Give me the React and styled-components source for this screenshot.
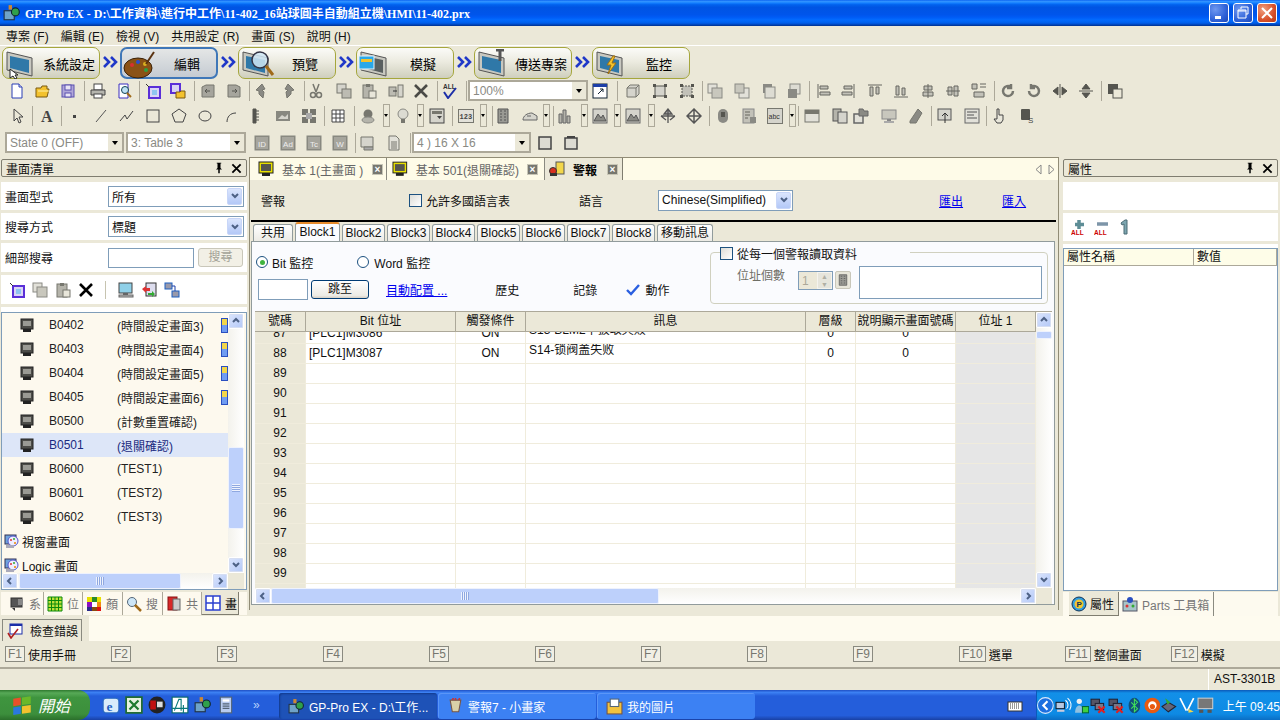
import React from 'react';
import styled, { createGlobalStyle } from 'styled-components';

const SANS = '"Liberation Sans", "Noto Sans CJK TC", sans-serif';

const GlobalStyle = createGlobalStyle`
  html, body {
    margin: 0;
    width: 1280px;
    height: 720px;
    overflow: hidden;
    background: #ebe8d8;
    font-family: ${SANS};
    font-size: 12px;
    color: #111;
  }
  * { box-sizing: border-box; }
`;

const Desktop = styled.div`
  width: 1280px;
  height: 720px;
  display: flex;
  flex-direction: column;
`;

/* title bar */
const TitleBar = styled.div`
  height: 26px;
  flex: none;
  display: flex;
  align-items: center;
  padding: 0 3px 0 3px;
  background: linear-gradient(#0058ee 0, #3593ff 4%, #288eff 8%, #127dff 12%, #0262ee 18%, #0054e3 28%, #0055eb 56%, #005bf5 66%, #026afe 76%, #0062ef 86%, #0052d6 92%, #0040ab 96%, #003092 100%);
`;
const TitleText = styled.div`
  margin-left: 4px;
  font-family: "Liberation Serif", "Noto Sans CJK TC", serif;
  font-weight: 700;
  font-size: 12px;
  color: #fff;
  white-space: nowrap;
`;
const WinButtons = styled.div`
  margin-left: auto;
  display: flex;
  gap: 4px;
`;
const WinButton = styled.div`
  width: 20px;
  height: 20px;
  border: 1px solid #fff;
  border-radius: 3px;
  background: ${p => p.$close
    ? 'radial-gradient(circle at 30% 30%, #f0a080, #d8502a 60%, #b83a18)'
    : 'radial-gradient(circle at 30% 30%, #6f98f0, #2f62d8 60%, #1c48b8)'};
  display: flex;
  align-items: center;
  justify-content: center;
`;

/* menu */
const MenuBar = styled.div`
  height: 20px;
  flex: none;
  display: flex;
  align-items: center;
  gap: 12px;
  padding-left: 6px;
  border-bottom: 1px solid #fff;
  white-space: nowrap;
`;

/* workflow */
const FlowBar = styled.div`
  height: 33px;
  flex: none;
  display: flex;
  align-items: flex-start;
  padding: 1px 0 0 2px;
`;
const Step = styled.div`
  width: 98px;
  height: 32px;
  flex: none;
  display: flex;
  align-items: center;
  position: relative;
  padding-left: 36px;
  border-radius: 7px;
  border: ${p => (p.$active ? '2px solid #3f77b8' : '1px solid #a5a63c')};
  background: ${p => (p.$active
    ? 'linear-gradient(#e4e6e6, #c5cbd2)'
    : 'linear-gradient(#fbfbf8 0, #ecebe0 45%, #cfcfbd 100%)')};
`;
const StepIcon = styled.div`
  position: absolute;
  left: 1px;
  top: 1px;
`;
const StepLabel = styled.span`
  flex: 1;
  text-align: center;
  font-size: 13px;
  color: #000;
`;
const FlowArrow = styled.div`
  width: 20px;
  flex: none;
  height: 30px;
  display: flex;
  align-items: center;
  justify-content: center;
`;

/* toolbars */
const ToolRow = styled.div`
  height: ${p => p.$h}px;
  flex: none;
  display: flex;
  align-items: center;
`;
const Slot = styled.div`
  flex: none;
  margin-left: ${p => p.$gap}px;
  width: ${p => p.$w}px;
  display: flex;
  align-items: center;
  justify-content: center;
`;
const ToolSep = styled.div`
  width: 1px;
  height: 20px;
  background: #aca899;
`;
const DropBox = styled.div`
  width: 7px;
  height: 23px;
  border: 1px solid #aca899;
  display: flex;
  align-items: center;
  justify-content: center;
  &::after {
    content: '';
    border: 2px solid transparent;
    border-top: 3px solid #000;
    border-bottom: 0;
  }
`;
const ToolCombo = styled.div`
  width: 100%;
  height: 21px;
  display: flex;
  background: #fff;
  border: 2px solid #aca899;
  color: #8a8a84;
  align-items: center;
  padding-left: 3px;
  white-space: nowrap;
  font-size: 12px;
`;
const ToolComboBtn = styled.div`
  margin-left: auto;
  width: 14px;
  height: 100%;
  flex: none;
  background: #ebe8d8;
  display: flex;
  align-items: center;
  justify-content: center;
  &::after {
    content: '';
    border: 3px solid transparent;
    border-top: 4px solid #000;
    border-bottom: 0;
  }
`;

/* main */
const Main = styled.div`
  height: 460px;
  flex: none;
  display: flex;
`;
const SidePanel = styled.div`
  width: ${p => p.$w}px;
  margin-left: ${p => p.$ml}px;
  flex: none;
  display: flex;
  flex-direction: column;
  padding-top: 3px;
`;
const DockTitle = styled.div`
  height: 18px;
  flex: none;
  border: 1px solid #7f7d70;
  border-radius: 2px;
  display: flex;
  align-items: center;
  padding: 0 4px;
  font-size: 12px;
`;
const DockButtons = styled.div`
  margin-left: auto;
  display: flex;
  gap: 6px;
  align-items: center;
`;
const WhiteRow = styled.div`
  height: ${p => p.$h}px;
  margin-top: ${p => p.$mt}px;
  flex: none;
  background: #fff;
  display: flex;
  align-items: center;
  padding-left: 4px;
`;
const RowLabel = styled.span`
  width: 103px;
  flex: none;
  font-size: 12px;
`;
const BlueCombo = styled.div`
  width: ${p => p.$w}px;
  height: 21px;
  flex: none;
  border: 1px solid #7f9db9;
  background: #fff;
  display: flex;
  align-items: center;
  padding-left: 3px;
  font-size: 12px;
  white-space: nowrap;
`;
const ComboBtn = styled.div`
  margin: 1px;
  margin-left: auto;
  width: 15px;
  height: 17px;
  border-radius: 2px;
  background: linear-gradient(#dbe5fd, #b3c8f7);
  border: 1px solid #c8d6f8;
  display: flex;
  align-items: center;
  justify-content: center;
`;
const TextBox = styled.div`
  width: ${p => p.$w}px;
  height: ${p => p.$h}px;
  flex: none;
  border: 1px solid #7f9db9;
  background: #fff;
`;
const SearchBtn = styled.div`
  width: 45px;
  height: 19px;
  margin-left: 4px;
  border: 1px solid #c9c7ba;
  border-radius: 3px;
  background: #f2f0e6;
  color: #a3a297;
  text-align: center;
  line-height: 17px;
  font-size: 12px;
`;
const IconRowSep = styled.div`
  width: 1px;
  height: 18px;
  margin: 0 8px 0 8px;
  background: #c7c4b0;
`;
const IconCell = styled.div`
  width: 23px;
  height: 18px;
  flex: none;
  display: flex;
  align-items: center;
  justify-content: center;
`;
const WhiteStrip = styled.div`
  height: 5px;
  margin-top: 3px;
  flex: none;
  background: #fff;
`;
const ListFrame = styled.div`
  height: 278px;
  flex: none;
  border: 1px solid #7f9db9;
  display: flex;
  flex-direction: column;
  background: #fdf9ee;
`;
const ListMain = styled.div`
  flex: 1;
  min-height: 0;
  display: flex;
`;
const ListBody = styled.div`
  width: 226px;
  flex: none;
  overflow: hidden;
`;
const ListRow = styled.div`
  height: 24px;
  display: flex;
  align-items: center;
  padding-left: 17px;
  background: ${p => (p.$sel ? '#dde6f8' : 'transparent')};
  color: ${p => (p.$sel ? '#1a2a80' : '#222')};
  font-size: 12px;
  white-space: nowrap;
`;
const RowCode = styled.span`
  width: 68px;
  flex: none;
  margin-left: 14px;
`;
const RowFlag = styled.div`
  margin-left: auto;
  width: 7px;
  height: 15px;
  border: 1px solid #2a4fc0;
  background: linear-gradient(#f2d64a 45%, #6f9cf2 45%);
`;
const GroupRow = styled.div`
  height: 24px;
  display: flex;
  align-items: center;
  gap: 3px;
  padding-left: 1px;
  font-size: 12px;
`;
const CornerFill = styled.div`
  width: 16px;
  flex: none;
  background: #ebe8d8;
`;

/* scrollbars */
const VScroll = styled.div`
  width: 16px;
  flex: none;
  display: flex;
  flex-direction: column;
  background: linear-gradient(to right, #f3f2ec, #fff);
`;
const HScroll = styled.div`
  height: 16px;
  flex: none;
  display: flex;
  background: linear-gradient(#f3f2ec, #fff);
`;
const ScrollBtn = styled.div`
  width: 16px;
  height: 16px;
  flex: none;
  border: 1px solid #fff;
  border-radius: 2px;
  background: linear-gradient(135deg, #dbe5fd, #b3c8f7);
  box-shadow: 0 0 0 1px #d6def2 inset;
  display: flex;
  align-items: center;
  justify-content: center;
`;
const Thumb = styled.div`
  flex: none;
  border: 1px solid #eef2fd;
  border-radius: 2px;
  background: #bdd0fb;
  width: ${p => (p.$h ? p.$size + 'px' : '100%')};
  height: ${p => (p.$h ? '100%' : p.$size + 'px')};
  margin-left: ${p => (p.$h ? p.$at + 'px' : 0)};
  margin-top: ${p => (p.$h ? 0 : p.$at + 'px')};
  display: flex;
  align-items: center;
  justify-content: center;
`;
const Grip = styled.div`
  width: ${p => (p.$h ? '8px' : '8px')};
  height: 8px;
  background: ${p => (p.$h
    ? 'repeating-linear-gradient(to right, #eef2fd 0 1px, #8fa8e0 1px 2px)'
    : 'repeating-linear-gradient(#eef2fd 0 1px, #8fa8e0 1px 2px)')};
`;
const ScrollFill = styled.div`
  flex: 1;
`;

/* side tabs */
const SideTabs = styled.div`
  height: 23px;
  margin-top: 2px;
  flex: none;
  display: flex;
  padding-left: 5px;
  background: #fdf9ee;
  color: #777;
`;
const SideTab = styled.div`
  width: ${p => p.$w}px;
  flex: none;
  display: flex;
  align-items: center;
  gap: 4px;
  padding-left: 3px;
  font-size: 12px;
  white-space: nowrap;
  color: ${p => (p.$on ? '#000' : '#777')};
  background: ${p => (p.$on ? '#ebe8d8' : 'transparent')};
  border-right: 1px solid ${p => (p.$on ? '#7f7d70' : '#aca899')};
  border-bottom: ${p => (p.$on ? '1px solid #7f7d70' : '0')};
`;

/* center */
const CenterPanel = styled.div`
  width: 810px;
  margin: 1px 0 6px 2px;
  flex: none;
  display: flex;
  flex-direction: column;
  border: 1px solid #918c76;
  border-bottom: 0;
  padding-right: 2px;
`;
const DocTabs = styled.div`
  height: 22px;
  flex: none;
  margin-right: -2px;
  display: flex;
  align-items: stretch;
  background: #fefbe8;
  padding-left: 6px;
`;
const DocTab = styled.div`
  width: ${p => p.$w}px;
  flex: none;
  display: flex;
  align-items: center;
  padding-left: ${p => p.$pl}px;
  gap: 8px;
  font-size: 12px;
  white-space: nowrap;
  font-weight: ${p => (p.$on ? 700 : 400)};
  color: ${p => (p.$on ? '#000' : '#666')};
  background: ${p => (p.$on ? '#ebe8d8' : 'transparent')};
  border-right: 1px solid ${p => (p.$on ? '#7f7d70' : '#8a8a80')};
`;
const TabClose = styled.div`
  width: 11px;
  height: 11px;
  margin-left: auto;
  margin-right: ${p => p.$mr}px;
  background: #77776f;
  border: 1px solid #c8c6b6;
  color: #fff;
  font-size: 10px;
  line-height: 9px;
  text-align: center;
  font-weight: 700;
  flex: none;
`;
const TabArrows = styled.div`
  margin-left: auto;
  margin-right: 3px;
  display: flex;
  align-items: center;
  gap: 6px;
`;
const FormHead = styled.div`
  height: 42px;
  flex: none;
  margin-left: 1px;
  border-bottom: 2px solid #000;
  display: flex;
  align-items: center;
`;
const HeadText = styled.span`
  margin-left: ${p => p.$ml}px;
  flex: none;
  font-size: 12px;
  white-space: nowrap;
`;
const CheckBox = styled.div`
  width: 13px;
  height: 13px;
  flex: none;
  margin-left: ${p => p.$ml || 0}px;
  border: 1px solid #1c5180;
  background: linear-gradient(135deg, #dcdcd7, #fff);
`;
const Link = styled.span`
  margin-left: ${p => p.$ml}px;
  flex: none;
  color: #0000ee;
  text-decoration: underline;
  font-size: 12px;
`;
const BlockTabs = styled.div`
  height: 19px;
  flex: none;
  display: flex;
  gap: 2px;
  align-items: flex-end;
  padding-left: 3px;
`;
const BlockTab = styled.div`
  width: ${p => p.$w}px;
  height: ${p => (p.$on ? 19 : 17)}px;
  flex: none;
  border: 1px solid #919b9c;
  border-bottom: 0;
  border-top: ${p => (p.$on ? '2px solid #e68b2c' : '1px solid #919b9c')};
  border-radius: 3px 3px 0 0;
  background: ${p => (p.$on ? '#fafbfe' : 'linear-gradient(#fff, #ecebe5)')};
  text-align: center;
  line-height: 16px;
  font-size: 12px;
  white-space: nowrap;
`;
const BlockBody = styled.div`
  flex: 1;
  min-height: 0;
  margin: 0 0 5px 1px;
  width: 804px;
  border: 1px solid #919b9c;
  background: #fafbfe;
  display: flex;
  flex-direction: column;
`;
const Controls = styled.div`
  height: 69px;
  flex: none;
  display: flex;
`;
const ControlsLeft = styled.div`
  width: 458px;
  flex: none;
  padding: 13px 0 0 4px;
`;
const RadioRow = styled.div`
  height: 14px;
  display: flex;
  align-items: center;
  font-size: 12px;
`;
const Radio = styled.div`
  width: 12px;
  height: 12px;
  flex: none;
  margin-left: ${p => p.$ml || 0}px;
  border-radius: 50%;
  border: 1px solid #1c5180;
  background: #fff;
  display: flex;
  align-items: center;
  justify-content: center;
  &::after {
    content: '';
    width: 5px;
    height: 5px;
    border-radius: 50%;
    background: ${p => (p.$on ? '#3fb43f' : 'transparent')};
  }
`;
const RadioLabel = styled.span`
  margin-left: ${p => p.$ml}px;
  white-space: nowrap;
`;
const JumpRow = styled.div`
  margin-top: 10px;
  height: 21px;
  display: flex;
  align-items: center;
  padding-left: 2px;
`;
const JumpBtn = styled.div`
  width: 58px;
  height: 19px;
  margin-left: 3px;
  flex: none;
  border: 1px solid #003c74;
  border-radius: 3px;
  background: linear-gradient(#fff, #ecebe5 85%, #d6d0c5);
  text-align: center;
  line-height: 17px;
  font-size: 12px;
`;
const GroupBox = styled.div`
  position: relative;
  width: 338px;
  height: 52px;
  flex: none;
  margin-top: 10px;
  border: 1px solid #d0d0bf;
  border-radius: 4px;
  display: flex;
  align-items: flex-start;
  padding: 13px 0 0 26px;
`;
const GroupLegend = styled.div`
  position: absolute;
  left: 9px;
  top: -6px;
  width: 190px;
  height: 13px;
  background: #fafbfe;
  display: flex;
  align-items: center;
  gap: 4px;
  font-size: 12px;
  white-space: nowrap;
`;
const GroupLabel = styled.span`
  width: 61px;
  flex: none;
  color: #6e6e66;
  font-size: 12px;
  margin-top: 0;
`;
const Spinner = styled.div`
  width: 35px;
  height: 19px;
  margin-top: 5px;
  flex: none;
  border: 1px solid #7f9db9;
  background: #ebe8d8;
  color: #aca899;
  display: flex;
  align-items: center;
  padding-left: 3px;
  justify-content: space-between;
`;
const SpinBtn = styled.div`
  width: 15px;
  height: 100%;
  background: #e6e5dc;
  border: 1px solid #f4f3ee;
  color: #b0afa4;
  font-size: 7px;
  line-height: 8px;
  text-align: center;
`;
const CalcBtn = styled.div`
  width: 16px;
  height: 18px;
  margin: 5px 8px 0 2px;
  flex: none;
  border: 1px solid #c9c7ba;
  border-radius: 2px;
  background: #e8e6da;
  display: flex;
  align-items: center;
  justify-content: center;
`;

/* grid */
const GridWrap = styled.div`
  margin-left: 3px;
  width: 797px;
  flex: 1;
  min-height: 0;
  display: flex;
  flex-direction: column;
  border-top: 1px solid #aca899;
`;
const GridMain = styled.div`
  flex: 1;
  min-height: 0;
  display: flex;
`;
const GridTable = styled.div`
  width: 781px;
  flex: none;
  display: flex;
  flex-direction: column;
  min-height: 0;
`;
const COLS = '51px 150px 70px 280px 50px 100px 80px';
const GridHead = styled.div`
  height: 20px;
  flex: none;
  display: grid;
  grid-template-columns: ${COLS};
  background: #ebe8d8;
  border-bottom: 1px solid #aca899;
  position: relative;
  z-index: 1;
`;
const HeadCell = styled.div`
  border-right: 1px solid #aca899;
  text-align: center;
  line-height: 19px;
  font-size: 12px;
  white-space: nowrap;
  overflow: hidden;
`;
const GridBody = styled.div`
  flex: 1;
  min-height: 0;
  overflow: hidden;
  background: #fff;
`;
const GridRow = styled.div`
  height: 20px;
  display: grid;
  grid-template-columns: ${COLS};
  margin-top: ${p => p.$mt || 0}px;
`;
const Cell = styled.div`
  border-right: 1px solid #f0ecdc;
  border-bottom: 1px solid #f0ecdc;
  line-height: 19px;
  font-size: 12px;
  white-space: nowrap;
  overflow: hidden;
  padding-left: ${p => (p.$left ? 3 : 0)}px;
  text-align: ${p => (p.$left ? 'left' : 'center')};
  background: ${p => p.$bg || 'transparent'};
`;
const MessageText = styled.span`
  position: relative;
  top: -3px;
`;

/* right */
const PropTable = styled.div`
  flex: 1;
  min-height: 0;
  border: 1px solid #7f9db9;
  background: #fff;
  margin-top: 0;
`;
const PropHead = styled.div`
  height: 17px;
  display: grid;
  grid-template-columns: 130px 1fr;
  background: #fefde8;
  border-bottom: 1px solid #aca899;
  line-height: 16px;
  font-size: 12px;
`;
const PropHeadCell = styled.div`
  padding-left: 3px;
  border-right: 1px solid #aca899;
`;
const PropWrap = styled.div`
  flex: 1;
  min-height: 0;
  display: flex;
  flex-direction: column;
  background: #fff;
  margin-top: 3px;
  padding-top: 4px;
`;
const PropTabs = styled.div`
  height: 24px;
  margin-top: 1px;
  flex: none;
  display: flex;
  padding-left: 6px;
  background: #fdfaef;
`;
const ActiveProp = styled.div`
  width: 50px;
  flex: none;
  display: flex;
  align-items: center;
  gap: 3px;
  padding-left: 2px;
  background: #ebe8d8;
  border-right: 1px solid #7f7d70;
  border-bottom: 1px solid #7f7d70;
  font-size: 12px;
`;
const IdleProp = styled.div`
  width: 95px;
  flex: none;
  display: flex;
  align-items: center;
  gap: 4px;
  padding-left: 3px;
  color: #777;
  border-right: 1px solid #8a8a80;
  font-size: 12px;
  white-space: nowrap;
`;

/* bottom */
const ErrorStrip = styled.div`
  height: 25px;
  flex: none;
  display: flex;
  align-items: flex-end;
  padding-left: 2px;
`;
const ErrorTab = styled.div`
  width: 80px;
  height: 22px;
  flex: none;
  display: flex;
  align-items: center;
  gap: 7px;
  padding-left: 4px;
  border: 1px solid #8a8a80;
  border-bottom: 0;
  font-size: 12px;
`;
const CreamFill = styled.div`
  flex: 1;
  height: 25px;
  margin-left: 7px;
  background: #fefbef;
`;
const FnBar = styled.div`
  height: 28px;
  flex: none;
  display: grid;
  grid-template-columns: repeat(12, 106px);
  padding: 0 0 0 5px;
  align-items: center;
  border-bottom: 2px solid #aca899;
`;
const FnItem = styled.div`
  display: flex;
  align-items: center;
  gap: 3px;
  font-size: 12px;
  white-space: nowrap;
`;
const FnKey = styled.span`
  height: 16px;
  padding: 0 2px;
  border: 1px solid #8a8a80;
  color: #77776f;
  line-height: 14px;
  background: #f1efe4;
  font-size: 12px;
`;
const StatusBar = styled.div`
  height: 21px;
  flex: none;
  display: flex;
  justify-content: flex-end;
  align-items: center;
  padding-right: 12px;
`;
const StatusCell = styled.div`
  width: 60px;
  height: 100%;
  border-left: 1px solid #fff;
  padding-left: 5px;
  line-height: 20px;
  font-size: 12px;
  white-space: nowrap;
`;

/* taskbar */
const TaskBar = styled.div`
  height: 30px;
  flex: none;
  display: flex;
  align-items: stretch;
  background: linear-gradient(#1f4fc4 0, #3c81f3 8%, #245edb 20%, #245edb 85%, #1941a5 100%);
`;
const StartBtn = styled.div`
  width: 90px;
  flex: none;
  display: flex;
  align-items: center;
  gap: 6px;
  padding-left: 12px;
  border-radius: 0 12px 12px 0;
  background: linear-gradient(#2f7a2f 0, #57a957 10%, #3f953f 25%, #3c8f3c 80%, #2b6f2b 100%);
  color: #fff;
  font-style: italic;
  font-size: 16px;
`;
const QuickBar = styled.div`
  width: 189px;
  flex: none;
  display: flex;
  align-items: center;
  padding-left: 12px;
  gap: 5px;
  color: #b9d1fb;
`;
const More = styled.span`
  margin-left: 13px;
  font-size: 12px;
`;
const TaskBtn = styled.div`
  width: 158px;
  margin: 3px 1px 1px 0;
  flex: none;
  display: flex;
  align-items: center;
  gap: 4px;
  padding-left: 9px;
  border-radius: 3px;
  color: #fff;
  font-size: 12px;
  white-space: nowrap;
  background: ${p => (p.$on ? '#1e52b7' : '#3c81f3')};
  box-shadow: ${p => (p.$on ? 'inset 1px 1px 2px #123a8c' : 'inset 1px 1px 0 #5a96f8')};
`;
const KeyboardSlot = styled.div`
  margin-left: auto;
  width: 29px;
  flex: none;
  display: flex;
  align-items: center;
`;
const Tray = styled.div`
  width: 244px;
  flex: none;
  display: flex;
  align-items: center;
  gap: 1px;
  background: linear-gradient(#0c59b9 0, #1290e8 10%, #0e8ae4 80%, #0b6ec4 100%);
  border-left: 1px solid #0c59b9;
  color: #fff;
  font-size: 12px;
`;
const Clock = styled.span`
  margin-left: 8px;
  white-space: nowrap;
`;

/* drawings */
const monitorBits = (
  <>
    <rect x="2" y="2" width="12" height="10" fill="#4c4c48" stroke="#222" />
    <rect x="4" y="4" width="8" height="5" fill="#9a9a94" />
    <rect x="4" y="12" width="8" height="3" fill="#222" />
  </>
);
const ALL = c => <text x="0" y="15.5" fontSize="6.5" fontWeight="700" fontFamily="Liberation Sans" fill={c}>ALL</text>;
const GLYPHS = {
  doc: <><path d="M3 1h7l3 3v11H3z" fill="#fff" stroke="#2a3fb5" /><path d="M10 1v3h3" fill="#dde" stroke="#2a3fb5" /></>,
  open: <><path d="M1 5h5l1-2h5v3h2l-2 8H1z" fill="#f3c22e" stroke="#7a5a10" /><path d="M3 8h11" stroke="#fff2a8" /></>,
  save: <><rect x="2" y="2" width="12" height="12" fill="#b0a6d8" stroke="#5a50b0" /><rect x="5" y="2" width="6" height="5" fill="#e8e4f5" stroke="#5a50b0" /><rect x="5" y="10" width="6" height="4" fill="#e8e4f5" stroke="#5a50b0" /></>,
  print: <><rect x="4" y="1" width="8" height="6" fill="#fff" stroke="#444" /><path d="M1 7h14v5H1z" fill="#b5b5ae" stroke="#444" /><rect x="4" y="11" width="8" height="4" fill="#fff" stroke="#444" /></>,
  preview: <><path d="M3 1h9v14H3z" fill="#fff" stroke="#3a2fc0" /><circle cx="9" cy="7" r="3.5" fill="#bfe2f5" stroke="#145" /><path d="M11 10l4 4" stroke="#a06a1a" strokeWidth="2" /></>,
  newScr: <><rect x="4" y="4" width="11" height="11" fill="#d9d4f5" stroke="#5a2fd8" strokeWidth="2" /><rect x="7" y="7" width="5" height="5" fill="#8fc4f0" /><path d="M1 1l3 3" stroke="#333" /></>,
  openScr: <><rect x="1" y="1" width="9" height="9" fill="#d9d4f5" stroke="#5a2fd8" strokeWidth="2" /><path d="M6 9h4l1-1h4v7H6z" fill="#f3c22e" stroke="#7a5a10" /></>,
  scrBack: <><path d="M2 4l4-2h8v12H2z" fill="#a6a59d" stroke="#77776f" /><path d="M10 8H5M7 6L5 8l2 2" stroke="#55554f" fill="none" /></>,
  scrFwd: <><path d="M2 2h8l4 2v10H2z" fill="#a6a59d" stroke="#77776f" /><path d="M6 8h5M9 6l2 2-2 2" stroke="#55554f" fill="none" /></>,
  undo: <path d="M9 1L3 7l3 1v3l4 4 1-6-2-2 3-1z" fill="#8a8a84" stroke="#77776f" />,
  redo: <path d="M7 1l6 6-3 1v3l-4 4-1-6 2-2-3-1z" fill="#8a8a84" stroke="#77776f" />,
  cut: <><path d="M5 1l3 8M11 1L8 9" stroke="#77776f" strokeWidth="1.5" /><circle cx="5" cy="12" r="2.5" fill="none" stroke="#77776f" strokeWidth="1.5" /><circle cx="11" cy="12" r="2.5" fill="none" stroke="#77776f" strokeWidth="1.5" /></>,
  copy: <><rect x="1" y="1" width="9" height="9" fill="#d5d4cc" stroke="#77776f" /><rect x="6" y="6" width="9" height="9" fill="#bcbbb2" stroke="#77776f" /></>,
  paste: <><rect x="2" y="2" width="10" height="13" fill="#b5b4ab" stroke="#77776f" /><rect x="5" y="1" width="4" height="3" fill="#77776f" /><rect x="8" y="8" width="7" height="7" fill="#e8e6da" stroke="#77776f" /></>,
  pasteSp: <><rect x="1" y="4" width="7" height="9" fill="#bcbbb2" stroke="#77776f" /><rect x="10" y="2" width="5" height="12" fill="#d5d4cc" stroke="#77776f" /><path d="M5 8h4" stroke="#333" /></>,
  del: <path d="M2 2l12 12M14 2L2 14" stroke="#4a4a46" strokeWidth="2.6" />,
  delBlack: <path d="M2 2l12 12M14 2L2 14" stroke="#000" strokeWidth="2.6" />,
  allCheck: <><text x="1" y="6" fontSize="6.5" fontWeight="700" fontFamily="Liberation Sans" fill="#333">ALL</text><path d="M2 9l4 6 8-10" stroke="#1c2fa8" strokeWidth="2" fill="none" /></>,
  zoomWin: <><rect x="1" y="1" width="14" height="14" fill="#fff" stroke="#123" /><rect x="1" y="1" width="14" height="3" fill="#1c3fa8" /><path d="M6 11l5-5M8 6h3v3" stroke="#123" fill="none" /></>,
  box3d: <path d="M2 5l3-3h9v9l-3 3H2zM2 5h9v9M11 5l3-3" fill="#d5d4cc" stroke="#77776f" />,
  group: <><rect x="3" y="3" width="10" height="10" fill="#d5d4cc" stroke="#55554f" /><path d="M1 1h3v3H1zM12 1h3v3h-3zM1 12h3v3H1zM12 12h3v3h-3z" fill="#55554f" /></>,
  ungroup: <><rect x="3" y="3" width="10" height="10" fill="#c2c1b8" stroke="#55554f" strokeDasharray="2 1" /><path d="M1 1h3v3H1zM12 1h3v3h-3zM1 12h3v3H1zM12 12h3v3h-3z" fill="#55554f" /></>,
  order1: <><rect x="1" y="1" width="9" height="9" fill="#e2e1d9" stroke="#8a8a84" /><rect x="5" y="5" width="10" height="10" fill="#c8c7bd" stroke="#8a8a84" /></>,
  order2: <><rect x="5" y="5" width="10" height="10" fill="#e2e1d9" stroke="#8a8a84" /><rect x="1" y="1" width="9" height="9" fill="#c8c7bd" stroke="#8a8a84" /></>,
  order3: <><rect x="2" y="1" width="9" height="9" fill="#8a8a84" /><rect x="4" y="4" width="10" height="11" fill="#dddcd3" stroke="#8a8a84" /></>,
  order4: <><rect x="4" y="1" width="10" height="10" fill="#dddcd3" stroke="#8a8a84" /><rect x="2" y="6" width="9" height="9" fill="#8a8a84" /></>,
  alignL: <path d="M2 1v14M4 3h8v3H4zM4 9h10v3H4z" fill="#c2c1b8" stroke="#666660" />,
  alignR: <path d="M14 1v14M4 3h8v3H4zM2 9h10v3H2z" fill="#c2c1b8" stroke="#666660" />,
  alignT: <path d="M1 2h14M3 4h3v9H3zM9 4h3v7H9z" fill="#c2c1b8" stroke="#666660" />,
  alignB: <path d="M1 14h14M3 3h3v9H3zM9 5h3v7H9z" fill="#c2c1b8" stroke="#666660" />,
  alignC: <path d="M8 1v14M4 3h8v4H4zM3 9h10v4H3z" fill="#c2c1b8" stroke="#666660" />,
  alignM: <path d="M1 8h14M3 4h4v8H3zM9 3h4v10H9z" fill="#c2c1b8" stroke="#666660" />,
  alignG: <path d="M1 1h5v5H1zM9 1h6M9 4h6M3 9h10v5H3z" fill="#c2c1b8" stroke="#666660" />,
  rotL: <path d="M13 8a5 5 0 1 1-2-4M11 1v4H7" fill="none" stroke="#77776f" strokeWidth="2.5" />,
  rotR: <path d="M3 8a5 5 0 1 0 2-4M5 1v4h4" fill="none" stroke="#77776f" strokeWidth="2.5" />,
  flipH: <path d="M8 1v14M6 4L1 8l5 4zM10 4l5 4-5 4z" fill="#55554f" stroke="#55554f" />,
  flipV: <path d="M1 8h14M4 6l4-5 4 5zM4 10l4 5 4-5z" fill="#55554f" stroke="#55554f" />,
  fgbg: <><rect x="1" y="1" width="10" height="10" fill="#55554f" /><rect x="6" y="6" width="9" height="9" fill="#ebe8d8" stroke="#55554f" /></>,
  arrow: <path d="M4 1v12l3-3 2 5 2-1-2-5h4z" fill="#ebe8d8" stroke="#444" />,
  letterA: <text x="2" y="14" fontSize="16" fontWeight="700" fontFamily="Liberation Serif" fill="#444">A</text>,
  dot: <rect x="6" y="7" width="3" height="3" fill="#444" />,
  line: <path d="M3 14L13 2" stroke="#555" />,
  poly: <path d="M1 13l5-6 2 4 6-8" stroke="#444" fill="none" />,
  rect: <rect x="2" y="2" width="12" height="12" fill="none" stroke="#444" />,
  penta: <path d="M8 1l7 5-3 8H4L1 6z" fill="none" stroke="#444" />,
  circle: <ellipse cx="8" cy="8" rx="6" ry="5" fill="none" stroke="#444" />,
  arc: <path d="M4 14c0-5 3-9 9-9" stroke="#444" fill="none" />,
  ruler: <path d="M5 1h3v14H5zM8 3h3M8 6h3M8 9h3M8 12h3" fill="#55554f" stroke="#55554f" />,
  image: <><rect x="1" y="3" width="14" height="10" fill="#888880" /><path d="M3 11l4-4 3 2 3-3v5z" fill="#d5d4cc" /></>,
  cross: <><rect x="1" y="1" width="6" height="6" fill="#77776f" /><rect x="9" y="1" width="6" height="6" fill="#77776f" /><rect x="1" y="9" width="6" height="6" fill="#77776f" /><rect x="9" y="9" width="6" height="6" fill="#77776f" /><rect x="5" y="5" width="6" height="6" fill="#aaa" /></>,
  table: <path d="M2 2h12v12H2zM2 6h12M2 10h12M6 2v12M10 2v12" fill="#fff" stroke="#444" />,
  stamp: <><circle cx="8" cy="6" r="4.5" fill="#77776f" /><ellipse cx="8" cy="12" rx="6" ry="3" fill="#b5b4ab" stroke="#8a8a84" /></>,
  bulb: <><circle cx="8" cy="6" r="5" fill="#dcdbd2" stroke="#8a8a84" /><rect x="6" y="11" width="4" height="4" fill="#77776f" /></>,
  panel: <><rect x="1" y="1" width="14" height="14" fill="#d5d4cc" stroke="#444" /><rect x="3" y="3" width="10" height="3" fill="#77776f" /><path d="M8 8h5l-2.500 3z" fill="#444" /></>,
  num: <><rect x="0.500" y="1.500" width="15" height="13" fill="#e2e1d9" stroke="#77776f" /><text x="1.500" y="11" fontSize="7" fontWeight="700" fontFamily="Liberation Mono" fill="#444">123</text></>,
  keys: <path d="M3 1h10v14H3zM5 3h2M9 3h2M5 6h2M9 6h2M5 9h2M9 9h2M5 12h2M9 12h2" fill="#9a9a94" stroke="#555" />,
  iron: <path d="M1 12c0-4 4-7 9-7l5 3v4zM5 8h4" fill="#d5d4cc" stroke="#666" />,
  bars: <path d="M2 6h3v9H2zM6 2h3v13H6zM10 8h3v7h-3z" fill="#b5b4ab" stroke="#666" />,
  chart: <><rect x="1" y="1" width="14" height="14" fill="#d5d4cc" stroke="#666" /><path d="M2 13l4-7 3 4 2-3 3 6z" fill="#8a8a84" stroke="#555" /></>,
  move1: <path d="M8 1v14M1 8h14M8 1L4 6h8zM1 8l5 4M15 8l-5 4" fill="#aaa" stroke="#555" strokeWidth="1.3" />,
  move2: <path d="M8 1v14M1 8h14M8 1L1 8l7 7 7-7z" fill="none" stroke="#555" strokeWidth="1.5" />,
  capsule: <><rect x="3" y="1" width="10" height="14" rx="5" fill="#8a8a84" /><rect x="6" y="4" width="4" height="5" fill="#55554f" /></>,
  form: <><rect x="2" y="1" width="11" height="14" fill="#c2c1b8" stroke="#888" /><path d="M4 4h5M4 7h5M4 10h3" stroke="#66665f" /><rect x="9" y="9" width="6" height="6" fill="#8a8a84" /></>,
  abc: <><rect x="0.500" y="0.500" width="15" height="15" fill="#d5d4cc" stroke="#77776f" /><text x="1.500" y="11" fontSize="7" fontFamily="Liberation Sans" fill="#333">abc</text></>,
  win: <><rect x="1" y="2" width="14" height="12" fill="#e2e1d9" stroke="#77776f" /><rect x="1" y="2" width="14" height="4" fill="#77776f" /></>,
  film: <><rect x="1" y="1" width="8" height="12" fill="#b5b4ab" stroke="#555" /><rect x="6" y="4" width="9" height="11" fill="#d5d4cc" stroke="#555" /></>,
  folderScr: <><rect x="1" y="6" width="9" height="9" fill="#e2e1d9" stroke="#666" strokeWidth="1.5" /><path d="M6 1h4l1 2h4v5H6z" fill="#8a8a84" stroke="#666" /></>,
  pc: <><rect x="1" y="2" width="14" height="9" fill="#c8c7bd" stroke="#888" /><rect x="6" y="11" width="4" height="2" fill="#888" /><rect x="3" y="13" width="10" height="2" fill="#aaa" /></>,
  pen: <path d="M3 13l8-12 4 4-6 10H3z" fill="#8a8a84" stroke="#77776f" />,
  upScr: <><rect x="1" y="1" width="13" height="11" fill="#d5d4cc" stroke="#555" /><path d="M8 15V6M5 8l3-3 3 3" stroke="#333" fill="none" /></>,
  textForm: <><rect x="1" y="1" width="14" height="14" fill="#e2e1d9" stroke="#666" /><path d="M3 4h10M3 7h7M3 10h10" stroke="#555" /></>,
  finger: <path d="M6 1h2v6h4v5l-2 3H6l-3-4 3 0z" fill="#e8e6da" stroke="#444" />,
  dbS: <><rect x="2" y="1" width="9" height="11" rx="1" fill="#55554f" /><text x="9" y="15" fontSize="8" fontFamily="Liberation Sans" fill="#444">S</text></>,
  idBox: <><rect x="0.500" y="0.500" width="15" height="15" fill="#888880" /><rect x="2" y="2" width="12" height="12" fill="#a6a59d" /></>,
  pages: <><path d="M1 2h12v10H1z" fill="#d5d4cc" stroke="#77776f" /><path d="M4 12h9v3H4z" fill="#aaa" stroke="#77776f" /></>,
  sheet: <><path d="M3 1h7l3 3v11H3z" fill="#e2e1d9" stroke="#77776f" /><path d="M5 7h6M5 9h6M5 11h6M5 13h6" stroke="#77776f" /></>,
  frame: <rect x="2" y="2" width="12" height="12" fill="#dcdbd2" stroke="#444" strokeWidth="1.5" />,
  frame2: <><rect x="2" y="3" width="12" height="11" fill="#dcdbd2" stroke="#444" strokeWidth="1.5" /><path d="M4 1h8v2H4z" fill="#444" /></>,
  screenDark: monitorBits,
  screenYellow: <><rect x="1" y="1" width="14" height="11" fill="#e8e000" stroke="#222" /><rect x="3" y="3" width="10" height="7" fill="#55554f" /><rect x="4" y="12" width="8" height="3" fill="#222" /></>,
  alarm: <><rect x="7" y="1" width="8" height="12" fill="#f2d64a" stroke="#555" /><circle cx="4" cy="10" r="3.500" fill="#d83020" stroke="#333" /><rect x="1" y="12" width="7" height="3" fill="#333" /></>,
  globe: <><rect x="2" y="2" width="11" height="9" fill="#6fa3dd" stroke="#335" /><circle cx="10" cy="8" r="5" fill="#eef" stroke="#55c" /><circle cx="8" cy="7" r="1" fill="#d33" /><circle cx="11" cy="6" r="1" fill="#3a3" /><circle cx="12" cy="10" r="1" fill="#e80" /><rect x="3" y="12" width="8" height="3" fill="#aab" /></>,
  pcBlue: <><rect x="1" y="1" width="13" height="10" fill="#8fd0e8" stroke="#444" /><rect x="5" y="11" width="5" height="2" fill="#666" /><rect x="1" y="13" width="14" height="2" fill="#bbb" stroke="#666" /></>,
  recycle: <><rect x="5" y="1" width="10" height="13" fill="#dde" stroke="#333" /><path d="M1 7l4-3v2h4v3H5v2z" fill="#d33" /><path d="M14 12l-3 3v-2H7v-2h4V9z" fill="#3a3" /></>,
  netScr: <><rect x="1" y="1" width="7" height="6" fill="#99a" stroke="#1c5fc0" /><rect x="8" y="9" width="7" height="6" fill="#99a" stroke="#1c5fc0" /><path d="M8 4h3v5" stroke="#1c3fa8" fill="none" /></>,
  plus: <><path d="M8 1v9M4 5.500h9" stroke="#5d8d96" strokeWidth="3.500" />{ALL('#c00')}</>,
  minus: <><path d="M3 5h11" stroke="#7d95a8" strokeWidth="3.500" />{ALL('#c00')}</>,
  one: <path d="M4 4l4-3h2v14H7V5L5 6z" fill="#7da6b0" stroke="#4a6a75" />,
  sys: <><rect x="2" y="2" width="11" height="9" fill="#555" stroke="#333" /><path d="M3 12l3 3v-3z" fill="#333" /><rect x="9" y="3" width="5" height="6" fill="#888" /></>,
  bitGrid: <path d="M1 1h14v14H1zM1 4.500h14M1 8h14M1 11.500h14M4.500 1v14M8 1v14M11.500 1v14" fill="#bfe03a" stroke="#0a8a0a" />,
  colors: <><rect x="1" y="1" width="5" height="5" fill="#e8e000" /><rect x="6" y="1" width="5" height="5" fill="#2a8a2a" /><rect x="11" y="1" width="4" height="5" fill="#e8e000" /><rect x="1" y="6" width="5" height="5" fill="#8a10c0" /><rect x="6" y="6" width="5" height="5" fill="#fff" /><rect x="11" y="6" width="4" height="5" fill="#f08a10" /><rect x="1" y="11" width="5" height="4" fill="#2a2a8a" /><rect x="6" y="11" width="5" height="4" fill="#8a4a10" /><rect x="11" y="11" width="4" height="4" fill="#e01010" /></>,
  search: <><circle cx="6" cy="6" r="4.500" fill="#cde6f8" stroke="#567" /><path d="M9 9l6 6" stroke="#a06a1a" strokeWidth="2.500" /></>,
  redBook: <><rect x="2" y="1" width="9" height="13" fill="#d82828" stroke="#811" /><rect x="7" y="3" width="7" height="11" fill="#ccc" stroke="#666" /></>,
  quad: <><rect x="1" y="1" width="14" height="14" fill="#fff" stroke="#2a3fd0" strokeWidth="1.500" /><path d="M8 1v14M1 8h14" stroke="#2a3fd0" strokeWidth="1.500" /></>,
  errCheck: <><rect x="3" y="1" width="12" height="10" fill="#fff" stroke="#1c2fa8" /><rect x="3" y="1" width="12" height="2" fill="#1c2fa8" /><path d="M1 10l3 5 7-9" stroke="#b02020" strokeWidth="1.600" fill="none" /></>,
  propP: <><circle cx="8" cy="8" r="7" fill="#2f9de0" stroke="#135" /><circle cx="8" cy="8" r="4.500" fill="#f2c62e" /><text x="5.500" y="11" fontSize="8" fontWeight="700" fontFamily="Liberation Sans" fill="#135">P</text></>,
  parts: <><rect x="1" y="5" width="14" height="10" fill="#a8c4c8" stroke="#556" /><circle cx="8" cy="4" r="3" fill="#2a4fc0" /><circle cx="5" cy="10" r="1.500" fill="#d33" /><circle cx="11" cy="10" r="1.500" fill="#3a3" /></>,
  pin: <path d="M5 1h6v1h-1v6l2 2H9v5H7v-5H4l2-2V2H5z" fill="#000" />,
  /* taskbar */
  ie: <><rect x="1" y="2" width="14" height="13" rx="3" fill="#d9ecfb" stroke="#2a6ac0" /><text x="4" y="13" fontSize="12" fontWeight="700" fontFamily="Liberation Serif" fill="#1c5fc0">e</text></>,
  excel: <><rect x="1" y="1" width="14" height="14" fill="#e6f2e0" stroke="#1e6a2e" strokeWidth="1.500" /><path d="M4 4l8 8M12 4l-8 8" stroke="#1e7a2e" strokeWidth="2" /></>,
  cad: <><circle cx="8" cy="8" r="7.500" fill="#222" /><rect x="2" y="4" width="5" height="8" fill="#c01010" /><rect x="8" y="5" width="5" height="5" fill="#ddd" /></>,
  plan: <><rect x="1" y="1" width="14" height="14" fill="#fff" stroke="#0a6a6a" /><path d="M3 13L7 3h2v10M1 11h14M11 8v7" stroke="#0a7a7a" fill="none" /></>,
  gp: <><rect x="1" y="6" width="9" height="8" fill="#6fa3c8" stroke="#234" /><circle cx="11" cy="7" r="3.500" fill="#2fa04a" stroke="#123" /><rect x="5" y="1" width="3" height="4" fill="#c83" /></>,
  calc: <><rect x="3" y="1" width="10" height="14" fill="#b8cbef" stroke="#567" /><rect x="5" y="3" width="6" height="2" fill="#fff" /><path d="M5 7h6M5 9h6M5 11h6" stroke="#567" /></>,
  paint: <><path d="M3 2l2 11h6l2-11z" fill="#d9d0a8" stroke="#754" /><path d="M5 2l1-2M8 2V0M11 2l1-2" stroke="#c33" strokeWidth="1.500" /></>,
  pics: <><rect x="1" y="4" width="14" height="11" fill="#f2c23e" stroke="#754" /><rect x="4" y="1" width="8" height="7" fill="#fff" stroke="#567" /></>,
  flag: <><path d="M1 3l6-1v6l-6 1z" fill="#e8502a" /><path d="M8 2l7-1v6l-7 1z" fill="#6ab82a" /><path d="M1 10l6-1v6l-6 1z" fill="#2a78e0" /><path d="M8 9l7-1v6l-7 1z" fill="#f2c22e" /></>,
  kb: <><rect x="1" y="5" width="14" height="9" fill="#fff" stroke="#333" /><path d="M3 7h10M3 9h10M3 11h10" stroke="#333" strokeDasharray="1 1" /></>,
  hide: <><circle cx="8" cy="8" r="7.500" fill="#1c70e0" stroke="#d8e8fb" /><path d="M10 4L6 8l4 4" stroke="#fff" strokeWidth="2" fill="none" /></>,
  wifi: <><rect x="1" y="5" width="8" height="6" fill="#b8c8e0" stroke="#123" /><rect x="2" y="12" width="7" height="2" fill="#ccd" /><path d="M10 3c3 2 3 6 1 8M12 1c4 3 4 8 2 11" stroke="#fff" fill="none" /></>,
  user: <><circle cx="6" cy="4" r="2.500" fill="#eee" /><path d="M2 15c0-5 2-7 4-7s4 2 4 7z" fill="#8fc0e0" /><rect x="9" y="9" width="6" height="6" fill="#3fd03f" stroke="#063" /></>,
  netX: <><rect x="1" y="2" width="8" height="6" fill="#556" stroke="#223" /><rect x="5" y="6" width="8" height="6" fill="#778" stroke="#223" /><path d="M8 9l6 6M14 9l-6 6" stroke="#e02020" strokeWidth="2" /></>,
  bt: <><ellipse cx="8" cy="8" rx="5.500" ry="7.500" fill="#10507a" /><path d="M5 5l6 6-3 3V2l3 3-6 6" stroke="#3fe05a" fill="none" /></>,
  orange: <><circle cx="8" cy="8" r="7.500" fill="#e85a10" /><circle cx="8" cy="8" r="4" fill="#fff" /><circle cx="8" cy="9" r="2.500" fill="#e85a10" /></>,
  tray3: <><path d="M1 9l6-4 7 4-7 5z" fill="#667" stroke="#223" /><path d="M4 1l5 4-3 2z" fill="#3a3" /></>,
  tray4: <><path d="M1 1l6 12M14 1L8 13" stroke="#fff" strokeWidth="1.600" /><path d="M9 11l5 3-5 1z" fill="#f2d64a" /></>,
  tray5: <><rect x="1" y="1" width="14" height="10" fill="#777" stroke="#ccc" /><rect x="2" y="12" width="4" height="3" fill="#555" /><rect x="10" y="12" width="4" height="3" fill="#555" /></>,
};

const Icon = ({ k, size = 16 }) => (
  <svg width={size} height={size} viewBox="0 0 16 16">{GLYPHS[k]}</svg>
);

const Chevron = ({ dir = 'down', color = '#4d6185' }) => {
  const d = { down: 'M1 2l3 3 3-3', up: 'M1 5l3-3 3 3', left: 'M5 1L2 4l3 3', right: 'M3 1l3 3-3 3' }[dir];
  return <svg width="8" height="8" viewBox="0 0 8 8"><path d={d} fill="none" stroke={color} strokeWidth="2" /></svg>;
};

const Tri = ({ dir }) => (
  <svg width="7" height="11" viewBox="0 0 7 11">
    <path d={dir === 'left' ? 'M6 1L1 5.500 6 10z' : 'M1 1l5 4.500L1 10z'} fill="none" stroke="#888" />
  </svg>
);

const FlowDouble = () => (
  <svg width="17" height="12" viewBox="0 0 17 12">
    <path d="M2 1l5 5-5 5M9 1l5 5-5 5" fill="none" stroke="#2038c8" strokeWidth="2.600" />
  </svg>
);

const StepArt = ({ kind }) => (
  <svg width="36" height="30" viewBox="0 0 36 30">
    {kind === 'palette' ? (
      <>
        <ellipse cx="15" cy="18" rx="14" ry="10" fill="#8a5216" stroke="#3a2208" />
        <circle cx="9" cy="15" r="2" fill="#d83030" />
        <circle cx="15" cy="12" r="2" fill="#2a50d0" />
        <circle cx="22" cy="14" r="2" fill="#d8b020" />
        <circle cx="23" cy="20" r="2" fill="#30a040" />
        <path d="M23 14L31 2" stroke="#5a3210" strokeWidth="2" />
      </>
    ) : (
      <>
        <path d="M3 3l25 6v18L3 21z" fill="#c8c8c0" stroke="#555" />
        <path d="M6 7l19 4v13L6 19z" fill={kind === 'sim' ? '#5a6060' : '#2f78a8'} />
        {kind === 'sys' && <path d="M6 20v9l3-2 2 3 2-1-2-3h3z" fill="#fff" stroke="#222" />}
        {kind === 'view' && <>
          <circle cx="20" cy="11" r="8" fill="#cfe6f5" fillOpacity=".85" stroke="#334" strokeWidth="1.500" />
          <path d="M26 17l7 9" stroke="#a06a1a" strokeWidth="3" />
        </>}
        {kind === 'sim' && <>
          <rect x="1" y="7" width="15" height="13" fill="#2aa8e8" stroke="#e8f4fb" />
          <rect x="3" y="10" width="11" height="3" fill="#f2c22e" />
        </>}
        {kind === 'send' && <path d="M24 12V2M20 1h8" stroke="#555" strokeWidth="3" />}
        {kind === 'mon' && <path d="M19 7l-6 9h4l-3 9 8-11h-4l3-7z" fill="#f2c22e" stroke="#a07010" />}
      </>
    )}
  </svg>
);

const place = (items, start = 0) => {
  let edge = start;
  return items.map(([kind, center, w = 16, text]) => {
    const left = center - w / 2;
    const gap = left - edge;
    edge = left + w;
    return { kind, w, gap, text };
  });
};

const ToolItem = ({ kind, w, gap, text }) => (
  <Slot $gap={gap} $w={w}>
    {kind === 'sep' && <ToolSep />}
    {kind === 'dd' && <DropBox />}
    {kind === 'combo' && <ToolCombo>{text}<ToolComboBtn /></ToolCombo>}
    {kind.startsWith('t:') && (
      <svg width="16" height="16" viewBox="0 0 16 16">
        {GLYPHS.idBox}
        <text x="8" y="11.500" textAnchor="middle" fontSize="8" fontFamily="Liberation Sans" fill="#eee">{kind.slice(2)}</text>
      </svg>
    )}
    {GLYPHS[kind] && <Icon k={kind} />}
  </Slot>
);

const S = ['sep', 0, 1];
const sep = x => ['sep', x, 1];
const dd = x => ['dd', x, 7];

const TOOL1 = place([
  ['doc', 17], ['open', 43], ['save', 68], sep(84), ['print', 98], ['preview', 124], sep(139),
  ['newScr', 153], ['openScr', 178], sep(194), ['scrBack', 208], ['scrFwd', 234], sep(249),
  ['undo', 261], ['redo', 289], sep(304), ['cut', 316], ['copy', 344], ['paste', 369], ['pasteSp', 396], ['del', 421], sep(437),
  ['allCheck', 450], sep(466), ['combo', 528, 120, '100%'], ['zoomWin', 600], sep(617), ['box3d', 633],
  ['group', 660], ['ungroup', 687], sep(702), ['order1', 715], ['order2', 742], ['order3', 769], ['order4', 794], sep(809),
  ['alignL', 824], ['alignR', 848], ['alignT', 875], ['alignB', 901], ['alignC', 928], ['alignM', 953], ['alignG', 979], sep(994),
  ['rotL', 1008], ['rotR', 1034], ['flipH', 1060], ['flipV', 1086], sep(1101), ['fgbg', 1115],
]);

const TOOL2 = place([
  ['arrow', 18], sep(32), ['letterA', 47], sep(61), ['dot', 75], ['line', 101], ['poly', 127], ['rect', 153], ['penta', 179],
  ['circle', 205], ['arc', 231], ['ruler', 256], ['image', 283], ['cross', 309], sep(324), ['table', 338], sep(354),
  ['stamp', 368], dd(386), ['bulb', 403], dd(420), ['panel', 437], sep(452), ['num', 466], dd(483), sep(492),
  ['keys', 503], ['iron', 530], dd(546), sep(553), ['bars', 565], dd(584), ['chart', 600], dd(617), ['chart', 633], dd(651),
  ['move1', 668], ['move2', 694], sep(709), ['capsule', 723], ['form', 749], ['abc', 775], dd(792), sep(798),
  ['win', 812], ['film', 840], ['folderScr', 861], ['pc', 889], ['pen', 915], sep(931), ['upScr', 945], ['textForm', 972], sep(986),
  ['finger', 999], ['dbS', 1027],
]);

const TOOL3 = place([
  ['combo', 64.5, 119, 'State 0 (OFF)'], ['combo', 186, 120, '3: Table 3'], ['t:ID', 262], ['t:Ad', 288], ['t:Tc', 314], ['t:W', 340],
  sep(355), ['pages', 368], ['sheet', 394], sep(410), ['combo', 471.5, 119, '4 ) 16 X 16'], ['frame', 545], ['frame2', 571],
]);

const SCREENS = [
  ['B0402', '(時間設定畫面3)', true], ['B0403', '(時間設定畫面4)', true], ['B0404', '(時間設定畫面5)', true], ['B0405', '(時間設定畫面6)', true],
  ['B0500', '(計數重置確認)'], ['B0501', '(退關確認)', false, true], ['B0600', '(TEST1)'], ['B0601', '(TEST2)'], ['B0602', '(TEST3)'],
];

const GRID_ROWS = [
  [87, '[PLC1]M3086', 'ON', 'S13-BLM2下扳取失败', '0', '0'],
  [88, '[PLC1]M3087', 'ON', 'S14-锁阀盖失败', '0', '0'],
  ...[89, 90, 91, 92, 93, 94, 95, 96, 97, 98, 99, 100].map(n => [n, '', '', '', '', '']),
];

const FN_KEYS = [
  ['F1', '使用手冊'], ['F2', ''], ['F3', ''], ['F4', ''], ['F5', ''], ['F6', ''], ['F7', ''], ['F8', ''], ['F9', ''],
  ['F10', '選單'], ['F11', '整個畫面'], ['F12', '模擬'],
];

const FLOW = [
  ['系統設定', 'sys'], ['編輯', 'palette', true], ['預覽', 'view'], ['模擬', 'sim'], ['傳送專案', 'send'], ['監控', 'mon'],
];

const DockClose = () => (
  <DockButtons>
    <Icon k="pin" size={12} />
    <Icon k="delBlack" size={11} />
  </DockButtons>
);

export default function App() {
  return (
    <Desktop>
      <GlobalStyle />
      <TitleBar>
        <Icon k="gp" size={18} />
        <TitleText>GP-Pro EX - D:\工作資料\進行中工作\11-402_16站球圓丰自動組立機\HMI\11-402.prx</TitleText>
        <WinButtons>
          <WinButton>
            <svg width="14" height="14" viewBox="0 0 14 14"><rect x="3" y="10" width="6" height="3" fill="#fff" /></svg>
          </WinButton>
          <WinButton>
            <svg width="14" height="14" viewBox="0 0 14 14"><path d="M5 3V1h7v7h-2M2 4h8v8H2zM2 5h8" fill="none" stroke="#fff" /></svg>
          </WinButton>
          <WinButton $close>
            <svg width="14" height="14" viewBox="0 0 14 14"><path d="M2 2l10 10M12 2L2 12" stroke="#fff" strokeWidth="2" /></svg>
          </WinButton>
        </WinButtons>
      </TitleBar>

      <MenuBar>
        <span>專案 (F)</span>
        <span>編輯 (E)</span>
        <span>檢視 (V)</span>
        <span>共用設定 (R)</span>
        <span>畫面 (S)</span>
        <span>說明 (H)</span>
      </MenuBar>

      <FlowBar>
        {FLOW.map(([label, art, active], i) => (
          <React.Fragment key={label}>
            {i > 0 && <FlowArrow><FlowDouble /></FlowArrow>}
            <Step $active={active}>
              <StepIcon><StepArt kind={art} /></StepIcon>
              <StepLabel>{label}</StepLabel>
            </Step>
          </React.Fragment>
        ))}
      </FlowBar>

      <ToolRow $h={23}>{TOOL1.map((t, i) => <ToolItem key={i} {...t} />)}</ToolRow>
      <ToolRow $h={27}>{TOOL2.map((t, i) => <ToolItem key={i} {...t} />)}</ToolRow>
      <ToolRow $h={27}>{TOOL3.map((t, i) => <ToolItem key={i} {...t} />)}</ToolRow>

      <Main>
        <SidePanel $w={246} $ml={1}>
          <DockTitle>畫面清單<DockClose /></DockTitle>
          <WhiteRow $h={28} $mt={5}>
            <RowLabel>畫面型式</RowLabel>
            <BlueCombo $w={136}>所有<ComboBtn><Chevron /></ComboBtn></BlueCombo>
          </WhiteRow>
          <WhiteRow $h={27} $mt={3}>
            <RowLabel>搜尋方式</RowLabel>
            <BlueCombo $w={136}>標題<ComboBtn><Chevron /></ComboBtn></BlueCombo>
          </WhiteRow>
          <WhiteRow $h={29} $mt={3}>
            <RowLabel>細部搜尋</RowLabel>
            <TextBox $w={86} $h={20} />
            <SearchBtn>搜尋</SearchBtn>
          </WhiteRow>
          <WhiteRow $h={29} $mt={3}>
            <IconCell><Icon k="newScr" /></IconCell>
            <IconCell><Icon k="order1" /></IconCell>
            <IconCell><Icon k="paste" /></IconCell>
            <IconCell><Icon k="delBlack" /></IconCell>
            <IconRowSep />
            <IconCell><Icon k="pcBlue" /></IconCell>
            <IconCell><Icon k="recycle" /></IconCell>
            <IconCell><Icon k="netScr" /></IconCell>
          </WhiteRow>
          <WhiteStrip />
          <ListFrame>
            <ListMain>
              <ListBody>
                {SCREENS.map(([code, name, flag, sel]) => (
                  <ListRow key={code} $sel={sel}>
                    <Icon k="screenDark" />
                    <RowCode>{code}</RowCode>
                    {name}
                    {flag && <RowFlag />}
                  </ListRow>
                ))}
                <GroupRow><Icon k="globe" />視窗畫面</GroupRow>
                <GroupRow><Icon k="globe" />Logic 畫面</GroupRow>
              </ListBody>
              <VScroll>
                <ScrollBtn><Chevron dir="up" /></ScrollBtn>
                <Thumb $size={82} $at={118}><Grip /></Thumb>
                <ScrollFill />
                <ScrollBtn><Chevron /></ScrollBtn>
              </VScroll>
            </ListMain>
            <ListMain as="div" style={{ flex: 'none' }}>
              <HScroll style={{ width: 226 }}>
                <ScrollBtn><Chevron dir="left" /></ScrollBtn>
                <Thumb $h $size={162} $at={1}><Grip $h /></Thumb>
                <ScrollFill />
                <ScrollBtn><Chevron dir="right" /></ScrollBtn>
              </HScroll>
              <CornerFill />
            </ListMain>
          </ListFrame>
          <SideTabs>
            <SideTab $w={38}><Icon k="sys" />系</SideTab>
            <SideTab $w={39}><Icon k="bitGrid" />位</SideTab>
            <SideTab $w={40}><Icon k="colors" />顏</SideTab>
            <SideTab $w={40}><Icon k="search" />搜</SideTab>
            <SideTab $w={39}><Icon k="redBook" />共</SideTab>
            <SideTab $w={37} $on><Icon k="quad" />畫</SideTab>
          </SideTabs>
        </SidePanel>

        <CenterPanel>
          <DocTabs>
            <DocTab $w={131} $pl={2}>
              <Icon k="screenYellow" />基本 1(主畫面 )<TabClose $mr={3}>×</TabClose>
            </DocTab>
            <DocTab $w={158} $pl={5}>
              <Icon k="screenYellow" />基本 501(退關確認)<TabClose $mr={6}>×</TabClose>
            </DocTab>
            <DocTab $w={78} $pl={4} $on>
              <Icon k="alarm" />警報<TabClose $mr={4}>×</TabClose>
            </DocTab>
            <TabArrows><Tri dir="left" /><Tri dir="right" /></TabArrows>
          </DocTabs>
          <FormHead>
            <HeadText $ml={10}>警報</HeadText>
            <CheckBox $ml={124} />
            <HeadText $ml={4}>允許多國語言表</HeadText>
            <HeadText $ml={69}>語言</HeadText>
            <BlueCombo $w={135} style={{ marginLeft: 55 }}>Chinese(Simplified)<ComboBtn><Chevron /></ComboBtn></BlueCombo>
            <Link $ml={146}>匯出</Link>
            <Link $ml={39}>匯入</Link>
          </FormHead>
          <BlockTabs>
            <BlockTab $w={40}>共用</BlockTab>
            {['Block1', 'Block2', 'Block3', 'Block4', 'Block5', 'Block6', 'Block7', 'Block8'].map((b, i) => (
              <BlockTab key={b} $w={i === 0 ? 45 : 43} $on={i === 0}>{b}</BlockTab>
            ))}
            <BlockTab $w={56}>移動訊息</BlockTab>
          </BlockTabs>
          <BlockBody>
            <Controls>
              <ControlsLeft>
                <RadioRow>
                  <Radio $on />
                  <RadioLabel $ml={4}>Bit 監控</RadioLabel>
                  <Radio $ml={44} />
                  <RadioLabel $ml={5}>Word 監控</RadioLabel>
                </RadioRow>
                <JumpRow>
                  <TextBox $w={50} $h={21} />
                  <JumpBtn>跳至</JumpBtn>
                  <Link $ml={17}>目動配置 ...</Link>
                  <HeadText $ml={48}>歷史</HeadText>
                  <HeadText $ml={54}>記錄</HeadText>
                  <svg width="14" height="12" viewBox="0 0 14 12" style={{ marginLeft: 29, flex: 'none' }}>
                    <path d="M1 6l4 4 8-9" fill="none" stroke="#2a5fe0" strokeWidth="2.400" />
                  </svg>
                  <HeadText $ml={5}>動作</HeadText>
                </JumpRow>
              </ControlsLeft>
              <GroupBox>
                <GroupLegend><CheckBox />從每一個警報讀取資料</GroupLegend>
                <GroupLabel>位址個數</GroupLabel>
                <Spinner>1<SpinBtn>▲<br />▼</SpinBtn></Spinner>
                <CalcBtn><Icon k="keys" size={12} /></CalcBtn>
                <TextBox $w={183} $h={33} />
              </GroupBox>
            </Controls>
            <GridWrap>
              <GridMain>
                <GridTable>
                  <GridHead>
                    {['號碼', 'Bit 位址', '觸發條件', '訊息', '層級', '說明顯示畫面號碼', '位址 1'].map(h => (
                      <HeadCell key={h}>{h}</HeadCell>
                    ))}
                  </GridHead>
                  <GridBody>
                    {GRID_ROWS.map((r, i) => (
                      <GridRow key={r[0]} $mt={i === 0 ? -8 : 0}>
                        <Cell $bg="#ebe8d8">{r[0]}</Cell>
                        <Cell $left>{r[1]}</Cell>
                        <Cell>{r[2]}</Cell>
                        <Cell $left><MessageText>{r[3]}</MessageText></Cell>
                        <Cell>{r[4]}</Cell>
                        <Cell>{r[5]}</Cell>
                        <Cell $bg="#e6e6e6" />
                      </GridRow>
                    ))}
                  </GridBody>
                </GridTable>
                <VScroll>
                  <ScrollBtn><Chevron dir="up" /></ScrollBtn>
                  <Thumb $size={8} $at={3} />
                  <ScrollFill />
                  <ScrollBtn><Chevron /></ScrollBtn>
                </VScroll>
              </GridMain>
              <HScroll>
                <ScrollBtn><Chevron dir="left" /></ScrollBtn>
                <Thumb $h $size={388} $at={0}><Grip $h /></Thumb>
                <ScrollFill />
                <ScrollBtn><Chevron dir="right" /></ScrollBtn>
                <CornerFill />
              </HScroll>
            </GridWrap>
          </BlockBody>
        </CenterPanel>

        <SidePanel $w={215} $ml={4}>
          <DockTitle>屬性<DockClose /></DockTitle>
          <WhiteRow $h={28} $mt={5} />
          <WhiteRow $h={28} $mt={3}>
            <IconCell><Icon k="plus" /></IconCell>
            <IconCell><Icon k="minus" /></IconCell>
            <IconCell><Icon k="one" /></IconCell>
          </WhiteRow>
          <PropWrap>
            <PropTable>
              <PropHead>
                <PropHeadCell>屬性名稱</PropHeadCell>
                <PropHeadCell>數值</PropHeadCell>
              </PropHead>
            </PropTable>
          </PropWrap>
          <PropTabs>
            <ActiveProp><Icon k="propP" />屬性</ActiveProp>
            <IdleProp><Icon k="parts" />Parts 工具箱</IdleProp>
          </PropTabs>
        </SidePanel>
      </Main>

      <ErrorStrip>
        <ErrorTab><Icon k="errCheck" />檢查錯誤</ErrorTab>
        <CreamFill />
      </ErrorStrip>

      <FnBar>
        {FN_KEYS.map(([key, label]) => (
          <FnItem key={key}><FnKey>{key}</FnKey>{label}</FnItem>
        ))}
      </FnBar>

      <StatusBar><StatusCell>AST-3301B</StatusCell></StatusBar>

      <TaskBar>
        <StartBtn><Icon k="flag" size={20} />開始</StartBtn>
        <QuickBar>
          {['ie', 'excel', 'cad', 'plan', 'gp', 'calc'].map(k => <Icon key={k} k={k} size={18} />)}
          <More>»</More>
        </QuickBar>
        <TaskBtn $on><Icon k="gp" size={17} />GP-Pro EX - D:\工作...</TaskBtn>
        <TaskBtn><Icon k="paint" size={17} />警報7 - 小畫家</TaskBtn>
        <TaskBtn><Icon k="pics" size={17} />我的圖片</TaskBtn>
        <KeyboardSlot><Icon k="kb" /></KeyboardSlot>
        <Tray>
          {['hide', 'wifi', 'user', 'netX', 'netX', 'bt', 'orange', 'tray3', 'tray4', 'tray5'].map((k, i) => (
            <Icon key={i} k={k} size={i === 0 ? 17 : 17} />
          ))}
          <Clock>上午 09:45</Clock>
        </Tray>
      </TaskBar>
    </Desktop>
  );
}
